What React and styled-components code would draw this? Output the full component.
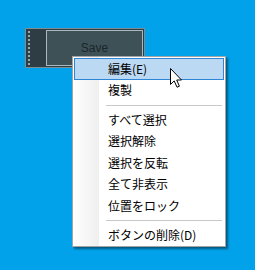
import React from "react";
import styled, { createGlobalStyle } from "styled-components";

const Global = createGlobalStyle`
  html, body { margin: 0; padding: 0; }
  body { background: #02a2ea; font-family: "Noto Sans CJK JP", "Noto Sans", sans-serif; }
`;

const Desktop = styled.div`
  position: relative;
  width: 255px;
  height: 270px;
  box-sizing: border-box;
  padding: 28px 0 0 25px;
  background: #02a2ea;
  overflow: hidden;
`;

const Widget = styled.div`
  display: flex;
  box-sizing: border-box;
  width: 120px;
  height: 40px;
  border: 1px solid #7e8b91;
  background: #2e3d43;
`;

const Grip = styled.div`
  width: 20px;
  box-sizing: border-box;
  padding: 2px 0 2px 2px;
  display: flex;
  &::before {
    content: "";
    display: block;
    width: 0;
    border-left: 2px dotted #98a9ae;
  }
`;

const Face = styled.div`
  flex: 1;
  margin: 1px 1px 1px 0;
  border: 1px solid #a9b8bb;
  background: #3e5157;
  display: flex;
  align-items: center;
  justify-content: center;
  font-family: "Liberation Sans", Arial, sans-serif;
  font-size: 12px;
  color: #1c262a;
`;

const Menu = styled.div`
  position: absolute;
  left: 72px;
  top: 56px;
  width: 154px;
  box-sizing: border-box;
  border: 1px solid #a3a3a3;
  padding: 1px 1px 0;
  background: linear-gradient(to right, #fefefe 0, #efefef 26px, #ffffff 26px);
  box-shadow: 2px 2px 2px rgba(0, 0, 0, 0.45);
`;

const Item = styled.div`
  height: 21.5px;
  box-sizing: border-box;
  display: flex;
  align-items: center;
  padding-left: 33px;
  border: 1px solid ${(p) => (p.$active ? "#2f86d6" : "transparent")};
  background: ${(p) => (p.$active ? "#bcd9f3" : "transparent")};
  font-family: "Noto Sans CJK JP", "Noto Sans", sans-serif;
  font-size: 12px;
  line-height: 1;
  color: #000;
  white-space: nowrap;
`;

const Separator = styled.div`
  height: 8px;
  display: flex;
  align-items: center;
  padding: 0 2px 0 32px;
  &::after {
    content: "";
    flex: 1;
    height: 1px;
    background: #c9c9c9;
  }
`;

const Cursor = styled.svg`
  position: absolute;
  left: 169px;
  top: 67px;
`;

const items = [
  { label: "編集(E)", active: true },
  { label: "複製" },
  "sep",
  { label: "すべて選択" },
  { label: "選択解除" },
  { label: "選択を反転" },
  { label: "全て非表示" },
  { label: "位置をロック" },
  "sep",
  { label: "ボタンの削除(D)" },
];

export default function App() {
  return (
    <>
      <Global />
      <Desktop>
        <Widget>
          <Grip />
          <Face>Save</Face>
        </Widget>
        <Menu>
          {items.map((it, i) =>
            it === "sep" ? (
              <Separator key={i} />
            ) : (
              <Item key={i} $active={it.active}>
                {it.label}
              </Item>
            )
          )}
        </Menu>
        <Cursor width="14" height="22" viewBox="0 0 14 22">
          <path
            d="M1.5 1.5 L1.5 17.5 L5.2 13.9 L8 20.2 L10.4 19.2 L7.7 13 L12.5 13 Z"
            fill="#fff"
            stroke="#000"
            strokeWidth="1"
            strokeLinejoin="miter"
          />
        </Cursor>
      </Desktop>
    </>
  );
}
